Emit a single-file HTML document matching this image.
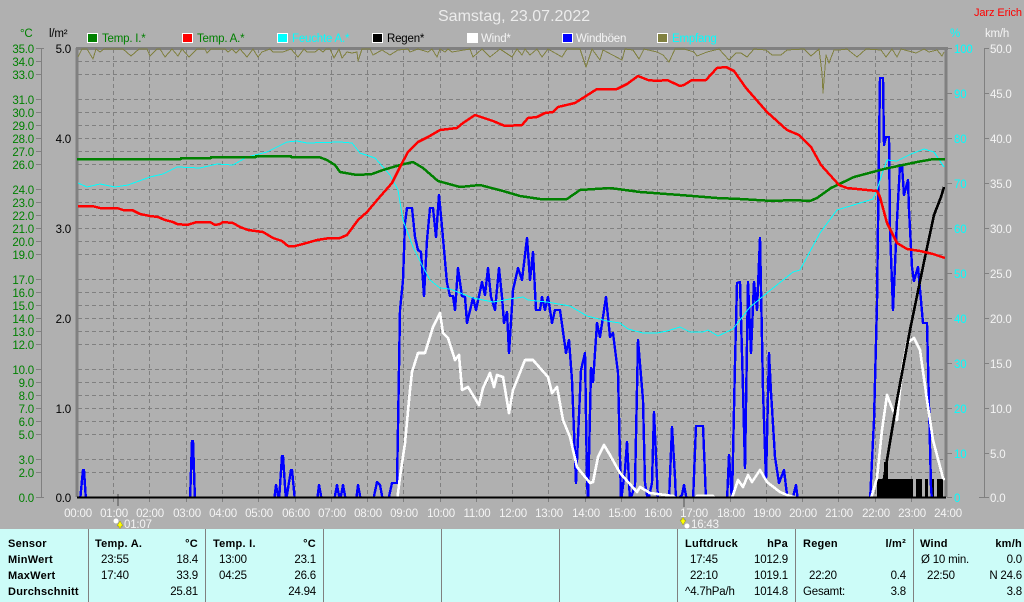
<!DOCTYPE html>
<html><head><meta charset="utf-8"><title>Samstag, 23.07.2022</title>
<style>
html,body{margin:0;padding:0;background:#b0b0b0;width:1024px;height:602px;overflow:hidden}
svg{display:block;font-family:"Liberation Sans",sans-serif;font-size:11.5px}
text{letter-spacing:-.2px}
.t{fill:#008000;text-anchor:end}
.l{fill:#000;text-anchor:end}
.c{fill:#00ffff}
.w{fill:#f4f4f4}
.h{fill:#f4f4f4;text-anchor:middle}
.b{font-weight:bold;fill:#000;font-size:11px;letter-spacing:.25px}
.n{fill:#000}
.r{fill:#000;text-anchor:end}
.be{font-weight:bold;fill:#000;font-size:11px;text-anchor:end;letter-spacing:.25px}
.p{fill:none;stroke-linejoin:round;shape-rendering:crispEdges}
</style></head><body>
<svg width="1024" height="602" viewBox="0 0 1024 602" xmlns="http://www.w3.org/2000/svg">
<defs><clipPath id="plot"><rect x="78" y="49" width="867" height="448"/></clipPath></defs>
<rect width="1024" height="602" fill="#b0b0b0"/>
<text x="438" y="21" style="font-size:16px;letter-spacing:0" fill="#ececec">Samstag, 23.07.2022</text>
<text x="974" y="16" fill="#ff0000" style="font-size:11px;letter-spacing:-.1px">Jarz Erich</text>
<text x="20" y="37" fill="#008000">°C</text>
<text x="49" y="37" fill="#000">l/m²</text>
<text x="950" y="37" class="c">%</text>
<text x="985" y="37" class="w">km/h</text>

<g stroke="#fff" stroke-width="1" shape-rendering="crispEdges">
<rect x="87.5" y="33.5" width="10" height="9" fill="#008000"/>
<rect x="182.5" y="33.5" width="10" height="9" fill="#ff0000"/>
<rect x="277.5" y="33.5" width="10" height="9" fill="#00ffff"/>
<rect x="372.5" y="33.5" width="10" height="9" fill="#000"/>
<rect x="467.5" y="33.5" width="10" height="9" fill="#fff"/>
<rect x="562.5" y="33.5" width="10" height="9" fill="#0000ff"/>
<rect x="657.5" y="33.5" width="10" height="9" fill="#808040"/>
</g>
<text x="102" y="42" fill="#008000">Temp. I.*</text>
<text x="197" y="42" fill="#008000">Temp. A.*</text>
<text x="292" y="42" class="c">Feuchte A.*</text>
<text x="387" y="42" fill="#000">Regen*</text>
<text x="481" y="42" class="w">Wind*</text>
<text x="576" y="42" class="w">Windböen</text>
<text x="672" y="42" class="c">Empfang</text>

<!-- grid -->
<g stroke="#808080" stroke-width="1" stroke-dasharray="4 3" shape-rendering="crispEdges" fill="none">
<path d="M78 61.5H946M78 74.5H946M78 99.5H946M78 112.5H946M78 125.5H946M78 138.5H946M78 151.5H946M78 164.5H946M78 189.5H946M78 202.5H946M78 215.5H946M78 228.5H946M78 241.5H946M78 254.5H946M78 279.5H946M78 292.5H946M78 305.5H946M78 318.5H946M78 331.5H946M78 344.5H946M78 369.5H946M78 382.5H946M78 395.5H946M78 408.5H946M78 421.5H946M78 434.5H946M78 459.5H946M78 472.5H946"/>
<path d="M113.5 49V497M149.5 49V497M186.5 49V497M222.5 49V497M258.5 49V497M295.5 49V497M331.5 49V497M367.5 49V497M403.5 49V497M440.5 49V497M476.5 49V497M512.5 49V497M548.5 49V497M585.5 49V497M621.5 49V497M657.5 49V497M693.5 49V497M730.5 49V497M766.5 49V497M802.5 49V497M838.5 49V497M875.5 49V497M911.5 49V497"/>
</g>
<g stroke="#808080" stroke-width="1" shape-rendering="crispEdges" fill="none">
<path d="M113.5 497V502M149.5 497V502M186.5 497V502M222.5 497V502M258.5 497V502M295.5 497V502M331.5 497V502M367.5 497V502M403.5 497V502M440.5 497V502M476.5 497V502M512.5 497V502M548.5 497V502M585.5 497V502M621.5 497V502M657.5 497V502M693.5 497V502M730.5 497V502M766.5 497V502M802.5 497V502M838.5 497V502M875.5 497V502M911.5 497V502"/>
<path d="M41.5 48V497M36 48.5H44M36 61.5H41M36 74.5H41M36 99.5H41M36 112.5H41M36 125.5H41M36 138.5H41M36 151.5H41M36 164.5H41M36 189.5H41M36 202.5H41M36 215.5H41M36 228.5H41M36 241.5H41M36 254.5H41M36 279.5H41M36 292.5H41M36 305.5H41M36 318.5H41M36 331.5H41M36 344.5H41M36 369.5H41M36 382.5H41M36 395.5H41M36 408.5H41M36 421.5H41M36 434.5H41M36 459.5H41M36 472.5H41M36 497.5H44"/>
<path d="M984.5 48V497M984.5 48.5H989M984.5 93.5H989M984.5 138.5H989M984.5 183.5H989M984.5 228.5H989M984.5 273.5H989M984.5 318.5H989M984.5 363.5H989M984.5 408.5H989M984.5 453.5H989M979 497.5H989"/>
<path d="M947 48.5H952M947 93.5H952M947 138.5H952M947 183.5H952M947 228.5H952M947 273.5H952M947 318.5H952M947 363.5H952M947 408.5H952M947 453.5H952M947 497.5H952"/>
</g>
<path d="M76 48.5H948" stroke="#808080" stroke-width="3" shape-rendering="crispEdges"/>
<path d="M77 48V497" stroke="#808080" stroke-width="3" shape-rendering="crispEdges"/>
<path d="M946 48V497" stroke="#808080" stroke-width="3" shape-rendering="crispEdges"/>
<rect x="117" y="494" width="2" height="12" fill="#808080"/>
<rect x="683" y="497" width="2" height="10" fill="#808080"/>

<!-- axis labels -->
<g class="t">
<text x="34" y="53" class="t">35.0</text><text x="34" y="66" class="t">34.0</text><text x="34" y="79" class="t">33.0</text>
<text x="34" y="104" class="t">31.0</text><text x="34" y="117" class="t">30.0</text><text x="34" y="130" class="t">29.0</text><text x="34" y="143" class="t">28.0</text><text x="34" y="156" class="t">27.0</text><text x="34" y="169" class="t">26.0</text>
<text x="34" y="194" class="t">24.0</text><text x="34" y="207" class="t">23.0</text><text x="34" y="220" class="t">22.0</text><text x="34" y="233" class="t">21.0</text><text x="34" y="246" class="t">20.0</text><text x="34" y="259" class="t">19.0</text>
<text x="34" y="284" class="t">17.0</text><text x="34" y="297" class="t">16.0</text><text x="34" y="310" class="t">15.0</text><text x="34" y="323" class="t">14.0</text><text x="34" y="336" class="t">13.0</text><text x="34" y="349" class="t">12.0</text>
<text x="34" y="374" class="t">10.0</text><text x="34" y="387" class="t">9.0</text><text x="34" y="400" class="t">8.0</text><text x="34" y="413" class="t">7.0</text><text x="34" y="426" class="t">6.0</text><text x="34" y="439" class="t">5.0</text>
<text x="34" y="464" class="t">3.0</text><text x="34" y="477" class="t">2.0</text><text x="34" y="502" class="t">0.0</text>
</g>
<text x="71" y="53" class="l">5.0</text><text x="71" y="143" class="l">4.0</text><text x="71" y="233" class="l">3.0</text><text x="71" y="323" class="l">2.0</text><text x="71" y="413" class="l">1.0</text><text x="71" y="502" class="l">0.0</text>
<text x="954" y="53" class="c">100</text><text x="954" y="98" class="c">90</text><text x="954" y="143" class="c">80</text><text x="954" y="188" class="c">70</text><text x="954" y="233" class="c">60</text><text x="954" y="278" class="c">50</text><text x="954" y="323" class="c">40</text><text x="954" y="368" class="c">30</text><text x="954" y="413" class="c">20</text><text x="954" y="458" class="c">10</text><text x="954" y="502" class="c">0</text>
<text x="990" y="53" class="w">50.0</text><text x="990" y="98" class="w">45.0</text><text x="990" y="143" class="w">40.0</text><text x="990" y="188" class="w">35.0</text><text x="990" y="233" class="w">30.0</text><text x="990" y="278" class="w">25.0</text><text x="990" y="323" class="w">20.0</text><text x="990" y="368" class="w">15.0</text><text x="990" y="413" class="w">10.0</text><text x="990" y="458" class="w">5.0</text><text x="990" y="502" class="w">0.0</text>

<text x="78" y="517" class="h">00:00</text><text x="114" y="517" class="h">01:00</text><text x="150" y="517" class="h">02:00</text><text x="187" y="517" class="h">03:00</text><text x="223" y="517" class="h">04:00</text><text x="259" y="517" class="h">05:00</text><text x="296" y="517" class="h">06:00</text><text x="332" y="517" class="h">07:00</text><text x="368" y="517" class="h">08:00</text><text x="404" y="517" class="h">09:00</text><text x="441" y="517" class="h">10:00</text><text x="477" y="517" class="h">11:00</text><text x="513" y="517" class="h">12:00</text><text x="549" y="517" class="h">13:00</text><text x="586" y="517" class="h">14:00</text><text x="622" y="517" class="h">15:00</text><text x="658" y="517" class="h">16:00</text><text x="694" y="517" class="h">17:00</text><text x="731" y="517" class="h">18:00</text><text x="767" y="517" class="h">19:00</text><text x="803" y="517" class="h">20:00</text><text x="839" y="517" class="h">21:00</text><text x="876" y="517" class="h">22:00</text><text x="912" y="517" class="h">23:00</text><text x="948" y="517" class="h">24:00</text>

<!-- olive -->
<polyline class="p" stroke="#808040" stroke-width="1" points="78,57 82,49 87,49 93,59 96,49 100,52 104,49 123,49 131,56 139,49 147,49 150,56 157,49 160,49 165,57 172,49 178,56 182,49 189,57 197,49 205,49 207,53 211,49 225,49 228,52 232,49 236,53 240,49 247,57 253,49 258,57 262,52 270,49 273,52 283,52 291,49 298,57 304,49 307,52 315,52 319,49 323,52 326,49 330,49 334,58 339,49 342,58 347,52 352,53 357,52 358,61 362,49 370,49 373,55 382,50 390,55 398,50 408,49 410,52 418,49 428,52 432,49 437,57 440,49 445,52 448,49 452,52 470,49 473,57 482,49 490,57 500,49 512,57 517,49 522,55 525,49 530,55 537,49 542,57 548,49 562,57 567,49 580,49 586,67 592,49 600,60 603,50 622,60 625,49 633,50 639,59 644,49 657,52 663,55 669,62 675,49 684,49 694,52 697,56 707,52 719,49 729,60 736,53 741,53 747,57 754,49 766,50 772,55 781,55 787,50 804,49 811,56 819,49 822,73 823,93 826,55 829,63 834,50 839,50 847,49 857,57 866,49 881,50 886,57 892,49 897,57 901,49 916,53 924,49 929,52 937,50 942,56 944,52"/>

<!-- rain bars -->
<g fill="#000" shape-rendering="crispEdges">
<rect x="877" y="479" width="36" height="18"/><rect x="884" y="462" width="4" height="18"/>
<rect x="916" y="479" width="6" height="18"/><rect x="925" y="479" width="3" height="18"/><rect x="931" y="479" width="3" height="18"/><rect x="937" y="479" width="6" height="18"/>
</g>

<g clip-path="url(#plot)">
<!-- blue -->
<polyline class="p" stroke="#0000ff" stroke-width="2.4" points="80,501 83,470 84,470 86,501 190,501 192,441 193,441 195,501 274,501 276,485 279,501 282,456 283,456 286,501 291,470 292,470 295,501 317,501 319,485 322,501 334,501 337,485 340,501 343,485 346,501 356,501 358,485 361,501 373,501 377,482 380,485 383,501 388,501 392,483 397,483 398,427 400,310 403,280 405,223 407,208 412,208 415,237 418,250 421,252 424,296 427,240 430,208 433,208 436,237 439,195 442,227 447,283 450,296 453,296 455,310 458,268 462,296 465,297 467,323 473,298 476,310 482,282 485,295 488,268 491,297 495,310 499,268 502,297 504,323 507,312 509,353 513,290 518,268 522,280 527,238 530,280 533,252 536,310 540,310 542,297 545,310 548,297 552,323 555,310 560,310 566,353 569,340 572,380 576,483 581,370 585,353 587,480 588,501 591,368 593,382 597,323 600,337 606,297 610,337 613,333 618,373 621,501 625,470 627,442 630,501 635,485 638,340 643,400 645,483 648,501 652,483 654,412 658,501 669,501 672,427 675,477 676,501 682,495 684,485 687,501 693,501 696,426 703,426 705,475 706,501 727,501 729,455 732,501 735,363 737,283 740,282 743,390 745,468 748,282 751,353 754,282 757,310 760,238 763,390 766,480 769,353 771,392 775,457 779,483 784,470 787,495 792,501 796,485 798,501 870,501 874,420 877,303 879,147 880,78 883,78 884,145 886,137 889,137 890,230 893,310 897,220 900,165 902,165 904,195 908,180 909,210 912,267 914,281 918,267 923,323 927,323 931,487 932,501 933,501"/>

<!-- cyan -->
<polyline class="p" stroke="#00ffff" stroke-width="1" points="78,183 87,187 100,184 115,187 128,185 150,177 163,174 177,167 200,168 217,164 233,165 247,157 267,152 287,142 297,141 307,143 340,142 352,143 360,153 375,158 390,175 398,190 403,220 413,247 423,267 430,280 440,288 450,289 473,298 493,302 510,299 523,297 528,300 547,302 570,306 587,316 607,321 620,323 628,329 643,333 657,333 667,331 680,327 690,332 703,332 708,330 718,336 733,329 750,307 767,293 793,272 800,270 820,233 837,210 847,207 873,199 877,190 881,177 887,160 897,161 911,154 924,149 934,152 944,167"/>

<!-- white -->
<polyline class="p" stroke="#ffffff" stroke-width="2.6" points="397,501 400,477 405,443 410,390 412,372 418,353 425,353 433,327 440,313 443,333 448,338 455,360 459,355 462,390 468,387 479,405 483,388 490,373 494,387 497,375 503,377 509,413 513,390 525,360 533,360 548,377 552,393 557,387 563,420 570,437 577,467 590,483 593,482 598,457 604,445 610,455 620,473 637,492 640,487 650,493 673,496 680,501 693,501 697,496 713,496 718,501 730,501 733,495 738,480 743,487 748,475 752,482 760,470 767,482 780,492 787,495 807,501"/>
<polyline class="p" stroke="#ffffff" stroke-width="2.6" points="870,501 872,495 877,478 882,430 887,395 892,408 897,420 902,370 907,343 914,338 920,350 928,407 933,440 943,478 945,480"/>

<!-- black -->
<polyline class="p" stroke="#000" stroke-width="2.6" points="881,497 887,460 897,400 910,330 925,257 934,215 941,197 944,187"/>
</g>

<!-- green -->
<polyline class="p" stroke="#008000" stroke-width="2.5" points="77,159 181,159 181,158 211,158 211,157 256,157 256,156 291,156 291,157 319,157 327,160 335,165 340,172 357,175 372,174 383,170 400,165 413,162 423,168 438,181 460,187 480,185 503,191 520,196 540,199 567,199 580,190 610,188 640,192 680,195 717,198 740,199 773,201 793,200 810,201 817,198 831,188 854,177 884,169 917,162 934,159 945,159"/>

<!-- red -->
<polyline class="p" stroke="#ff0000" stroke-width="2.5" points="78,206 92,206 100,208 117,208 123,210 132,210 140,214 150,216 158,217 165,220 173,222 177,224 187,225 197,222 210,222 215,225 220,224 223,222 233,223 240,227 248,230 263,232 273,238 282,241 288,246 295,246 303,244 317,240 330,238 340,238 347,235 358,220 367,212 378,199 392,183 400,167 408,152 418,142 428,137 440,130 457,128 463,123 475,115 493,121 505,126 522,125 528,118 537,117 545,113 553,112 558,107 575,103 597,89 617,89 627,84 638,76 648,80 657,81 667,80 680,86 684,85 692,80 706,80 717,68 726,67 734,71 746,88 767,112 787,130 799,135 811,147 821,165 839,185 847,188 877,191 880,197 887,223 897,243 907,249 920,251 933,254 945,258"/>
<path d="M77 497.5H946" stroke="#000" stroke-width="2" shape-rendering="crispEdges"/>

<!-- markers -->
<circle cx="116" cy="521" r="2.5" fill="#fff"/>
<path d="M120 521L123 526H121V528H119V526H117Z" fill="#ffff00" stroke="#808000" stroke-width=".4"/>
<text x="124" y="528" class="w">01:07</text>
<path d="M683 525L680 520H682V518H684V520H686Z" fill="#ffff00" stroke="#808000" stroke-width=".4"/>
<circle cx="687" cy="526" r="2.5" fill="#fff"/>
<text x="691" y="528" class="w">16:43</text>

<!-- table -->
<rect x="0" y="529" width="1024" height="73" fill="#ccfcf8"/>
<g stroke="#808080" stroke-width="1" shape-rendering="crispEdges">
<path d="M88.500 529V602M205.500 529V602M323.500 529V602M441.500 529V602M559.500 529V602M677.500 529V602M795.500 529V602M913.500 529V602"/>
</g>
<text x="8" y="547" class="b">Sensor</text><text x="8" y="563" class="b">MinWert</text><text x="8" y="579" class="b">MaxWert</text><text x="8" y="595" class="b">Durchschnitt</text>
<text x="95" y="547" class="b">Temp. A.</text><text x="198" y="547" class="be">°C</text>
<text x="101" y="563" class="n">23:55</text><text x="198" y="563" class="r">18.4</text>
<text x="101" y="579" class="n">17:40</text><text x="198" y="579" class="r">33.9</text>
<text x="198" y="595" class="r">25.81</text>
<text x="213" y="547" class="b">Temp. I.</text><text x="316" y="547" class="be">°C</text>
<text x="219" y="563" class="n">13:00</text><text x="316" y="563" class="r">23.1</text>
<text x="219" y="579" class="n">04:25</text><text x="316" y="579" class="r">26.6</text>
<text x="316" y="595" class="r">24.94</text>
<text x="685" y="547" class="b">Luftdruck</text><text x="788" y="547" class="be">hPa</text>
<text x="690" y="563" class="n">17:45</text><text x="788" y="563" class="r">1012.9</text>
<text x="690" y="579" class="n">22:10</text><text x="788" y="579" class="r">1019.1</text>
<text x="685" y="595" class="n">^4.7hPa/h</text><text x="788" y="595" class="r">1014.8</text>
<text x="803" y="547" class="b">Regen</text><text x="906" y="547" class="be">l/m²</text>
<text x="809" y="579" class="n">22:20</text><text x="906" y="579" class="r">0.4</text>
<text x="803" y="595" class="n">Gesamt:</text><text x="906" y="595" class="r">3.8</text>
<text x="920" y="547" class="b">Wind</text><text x="1022" y="547" class="be">km/h</text>
<text x="921" y="563" class="n">Ø 10 min.</text><text x="1022" y="563" class="r">0.0</text>
<text x="927" y="579" class="n">22:50</text><text x="1022" y="579" class="r">N 24.6</text>
<text x="1022" y="595" class="r">3.8</text>
</svg>
</body></html>
